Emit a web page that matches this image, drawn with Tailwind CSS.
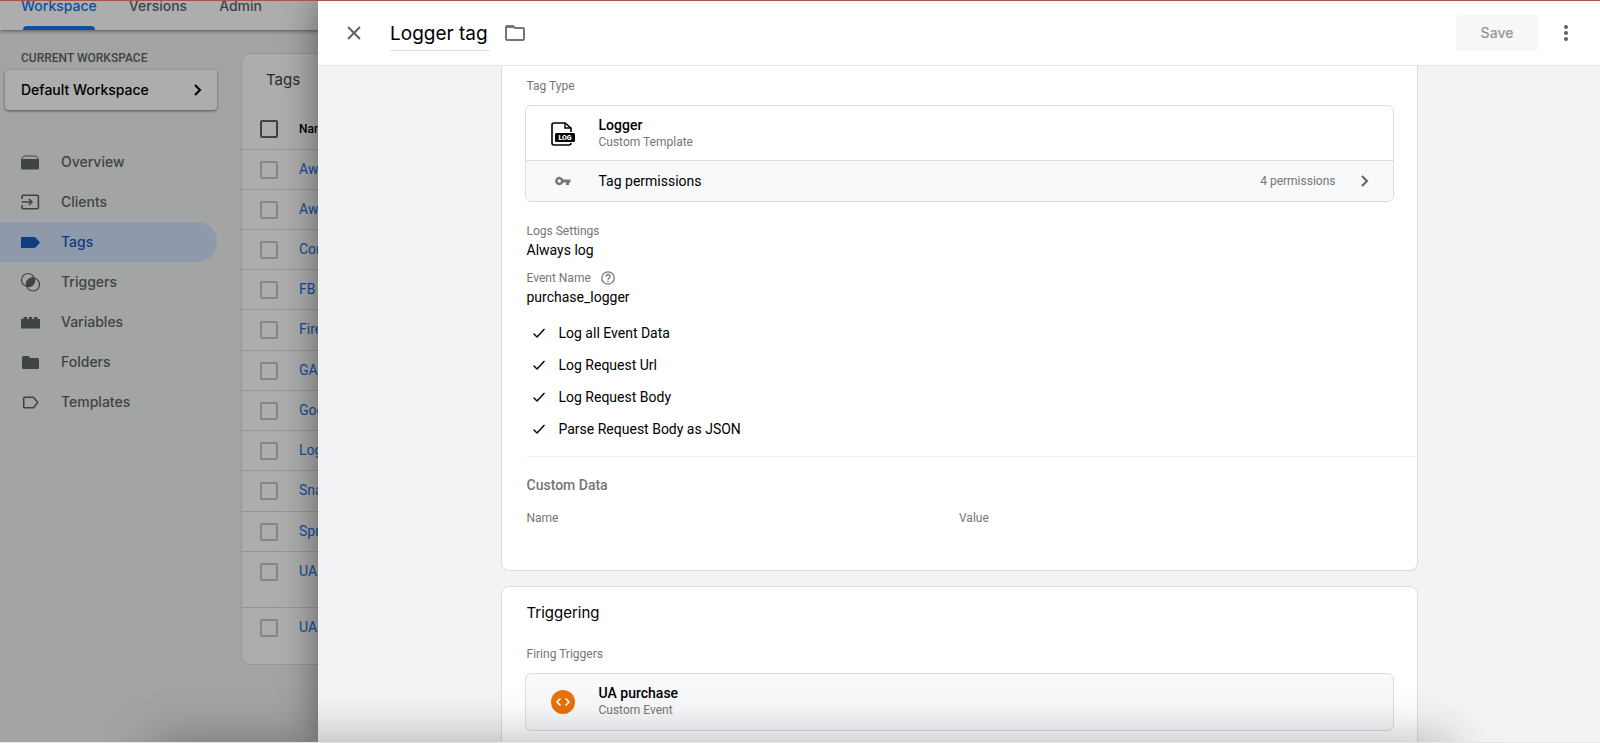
<!DOCTYPE html>
<html lang="en">
<head>
    <meta charset="UTF-8">
    <meta name="viewport" content="width=device-width, initial-scale=1.0">
    <title>Logger tag - Tag Manager</title>
    <script src="https://cdn.jsdelivr.net/npm/@tailwindcss/browser@4"></script>
</head>
<body class="relative h-screen overflow-hidden bg-[#f1f3f4] font-['Roboto',sans-serif] text-sm text-black">

    <!-- Workspace page -->
    <header class="relative z-10 -mt-[18px] h-12 bg-white shadow-[0_1px_4px_rgba(0,0,0,0.5)]">
        <nav class="flex h-full gap-8 pl-[21px] font-['Inter',sans-serif] text-sm font-medium text-[#5f6368]">
            <a href="#" class="relative flex items-center text-[#1a73e8]">
                Workspace
                <span class="absolute inset-x-0.5 bottom-0 h-1 rounded-t bg-[#1a73e8]"></span>
            </a>
            <a href="#" class="flex items-center">Versions</a>
            <a href="#" class="flex items-center">Admin</a>
        </nav>
    </header>

    <div class="flex items-start">
        <aside class="w-[241px] shrink-0 pt-[18px] font-['Inter',sans-serif]">
            <h2 class="pl-[21px] font-['Roboto',sans-serif] text-xs leading-5 font-medium text-[#5f6368]">CURRENT WORKSPACE</h2>
            <button class="mt-0.5 ml-[5px] flex h-10 w-[212px] items-center justify-between rounded bg-white pr-[15px] pl-4 text-sm font-medium shadow-[0_1px_3px_rgba(0,0,0,0.5)]">
                Default Workspace
                <svg class="h-3 w-2" viewBox="0 0 8 12" fill="none" stroke="currentColor" stroke-width="2"><path d="M1 1l5 5-5 5"/></svg>
            </button>
            <nav class="mt-8 mr-6 text-sm font-medium text-[#5f6368]">
                <a href="#" class="flex h-10 items-center gap-[21px] pl-5">
                    <svg class="h-5 w-5" viewBox="0 0 20 20" fill="currentColor"><path d="M1 9h18v7a1.500 1.500 0 0 1-1.500 1.500h-15A1.500 1.500 0 0 1 1 16z"/><path d="M1.500 9V7L4 4h12l2.500 3v2" fill="none" stroke="currentColor"/><path d="M1 8.500Q1 7 3 7h14q2 0 2 1.500V10H1z"/></svg>
                    Overview
                </a>
                <a href="#" class="flex h-10 items-center gap-[21px] pl-5">
                    <svg class="h-5 w-5" viewBox="0 0 20 20" fill="none" stroke="currentColor" stroke-width="1.600"><path d="M2 7V4.500A1.200 1.200 0 0 1 3.200 3.300h14a1.200 1.200 0 0 1 1.200 1.200v11a1.200 1.200 0 0 1-1.200 1.200h-14A1.200 1.200 0 0 1 2 15.500V13M1.500 10h10.500M9 7l3 3-3 3"/></svg>
                    Clients
                </a>
                <a href="#" class="flex h-10 items-center gap-[21px] rounded-r-full bg-[#d2e3fc] pl-5 text-[#185abc]">
                    <svg class="h-5 w-5" viewBox="0 0 20 20" fill="currentColor"><path d="M1 5h13.200q1 0 1.600.8L20 10.500l-4.200 4.700q-.6.8-1.600.8H1z"/></svg>
                    Tags
                </a>
                <a href="#" class="flex h-10 items-center gap-[21px] pl-5">
                    <svg class="h-5 w-5" viewBox="0 0 20 20" fill="none" stroke="currentColor" stroke-width="1.200"><circle cx="8" cy="8" r="6.500"/><circle cx="13" cy="12.500" r="6.500"/><path fill="currentColor" d="M14.400 6.200A6.500 6.500 0 0 0 6.600 14.300 6.500 6.500 0 0 0 14.400 6.200z"/></svg>
                    Triggers
                </a>
                <a href="#" class="flex h-10 items-center gap-[21px] pl-5">
                    <svg class="h-5 w-5" viewBox="0 0 20 20" fill="currentColor"><path d="M1 7h2.500V5H7v2h1.800V5h3.400v2H14V5h3.500v2H20v9.500H1z"/></svg>
                    Variables
                </a>
                <a href="#" class="flex h-10 items-center gap-[21px] pl-5">
                    <svg class="h-5 w-5" viewBox="0 0 20 20" fill="currentColor"><path d="M3.500 4h5l1.800 2h7.200A1.500 1.500 0 0 1 19 7.500v8a1.500 1.500 0 0 1-1.500 1.500h-14A1.500 1.500 0 0 1 2 15.500v-10A1.500 1.500 0 0 1 3.500 4z"/></svg>
                    Folders
                </a>
                <a href="#" class="flex h-10 items-center gap-[21px] pl-5">
                    <svg class="h-5 w-5" viewBox="0 0 20 20" fill="none" stroke="currentColor" stroke-width="1.600" stroke-linejoin="round"><path d="M4.500 5.300h9l4.200 5.200-4.200 5.200h-9a.8.8 0 0 1-.8-.8V6.100a.8.8 0 0 1 .8-.8z"/></svg>
                    Templates
                </a>
            </nav>
        </aside>

        <main class="mt-[23px] flex-1 rounded-l-[10px] border border-[#dadce0] bg-white">
            <h1 class="pt-[14px] pb-[17px] pl-6 font-['Inter',sans-serif] text-[15px] leading-6 text-[#3c4043]">Tags</h1>
            <table class="h-[555px] w-full border-collapse text-left">
                <thead>
                    <tr class="h-10">
                        <th class="w-[57px] pl-[18px]"><input type="checkbox" aria-label="Select all tags" class="block h-[18px] w-[18px] appearance-none rounded-xs border-2 border-[#5f6368]"></th>
                        <th class="text-xs font-medium">Name</th>
                    </tr>
                </thead>
                <tbody id="tagList" class="align-top text-[#1a73e8]"></tbody>
            </table>
        </main>
    </div>

    <!-- Dimmed backdrop -->
    <div class="absolute inset-0 z-20 bg-black/32"></div>

    <!-- Tag editor sheet -->
    <section class="absolute inset-y-0 right-0 left-[318px] z-30 flex flex-col bg-[#f1f3f4] shadow-[0_0_36px_rgba(0,0,0,0.45)]">
        <header class="flex h-[66px] shrink-0 items-center border-b border-[#e3e5e6] bg-white pr-[26px] pl-[29px]">
            <button aria-label="Close" class="text-[#5f6368]">
                <svg class="h-[14px] w-[14px]" viewBox="0 0 14 14" fill="none" stroke="currentColor" stroke-width="2"><path d="M1 1l12 12M13 1L1 13"/></svg>
            </button>
            <input type="text" value="Logger tag" aria-label="Tag name" class="mt-0.5 ml-[29px] h-[34px] w-[100px] border-b border-[#dadce0] font-['Inter',sans-serif] text-[19px] outline-none">
            <button aria-label="Move to folder" class="ml-[15px] text-[#757575]">
                <svg class="h-4 w-5" viewBox="0 0 20 16" fill="none" stroke="currentColor" stroke-width="2" stroke-linejoin="round"><path d="M1 2v12q0 1 1 1h16q1 0 1-1V4q0-1-1-1h-8L8 1H2Q1 1 1 2z"/><path d="M1 1h7l2 2H1z" fill="currentColor" stroke="none"/></svg>
            </button>
            <button disabled class="ml-auto h-9 w-[82px] rounded bg-[#f7f7f7] font-['Inter',sans-serif] text-sm font-medium text-[#949494]">Save</button>
            <button aria-label="More actions" class="ml-5 text-[#5f6368]">
                <svg class="h-4 w-4" viewBox="0 0 16 16" fill="currentColor"><circle cx="8" cy="2" r="2"/><circle cx="8" cy="8" r="2"/><circle cx="8" cy="14" r="2"/></svg>
            </button>
        </header>

        <div class="flex-1 overflow-hidden">
            <!-- Tag configuration -->
            <div class="mx-auto max-w-[917px] rounded-b-lg border border-t-0 border-[#dadce0] bg-white px-[23px] pt-[10px] pb-[43px]">
                <h3 class="pl-0.5 text-xs leading-5 text-[#757575]">Tag Type</h3>
                <div class="mt-[9px] overflow-hidden rounded-md border border-[#dadce0]">
                    <div class="flex h-[54px] items-center gap-6 pt-0.5 pl-[25px]">
                        <svg class="h-6 w-6" viewBox="0 0 24 24"><path d="M20 10V6l-6-5H3Q1 1 1 3v18q0 2 2 2h15q2 0 2-2" fill="none" stroke="#000" stroke-width="1.600"/><path d="M14 1v5h6" fill="none" stroke="#000" stroke-width="1.400"/><rect x="4" y="11" width="20" height="9" rx="1.500"/><text x="14" y="18" text-anchor="middle" fill="#fff" font-family="Roboto, sans-serif" font-size="7" font-weight="900">LOG</text></svg>
                        <div>
                            <div class="text-sm leading-[17px] font-medium">Logger</div>
                            <div class="text-xs leading-[17px] text-[#757575]">Custom Template</div>
                        </div>
                    </div>
                    <button class="flex h-[41px] w-full items-center border-t border-[#dadce0] bg-[#f8f9fa] pr-6 pl-[25px] text-left">
                        <svg class="h-4 w-6 text-[#757575]" viewBox="0 0 24 16" fill="currentColor"><path fill-rule="evenodd" d="M12.200 6.500A4.200 4.200 0 1 0 12.200 9.500H15V12h3V9.500h1.500v-3zM8.300 6.300a1.700 1.700 0 1 1 0 3.400 1.700 1.700 0 0 1 0-3.400z"/></svg>
                        <span class="ml-6">Tag permissions</span>
                        <span class="ml-auto text-xs text-[#757575]">4 permissions</span>
                        <svg class="ml-[25px] h-3 w-2 text-[#5f6368]" viewBox="0 0 8 12" fill="none" stroke="currentColor" stroke-width="2"><path d="M1 1l5 5-5 5"/></svg>
                    </button>
                </div>

                <dl class="mt-5 pl-0.5">
                    <dt class="text-xs leading-[18px] text-[#757575]">Logs Settings</dt>
                    <dd class="leading-5">Always log</dd>
                    <dt class="mt-[9px] flex items-center gap-[10px] text-xs leading-[18px] text-[#757575]">
                        Event Name
                        <svg class="h-[14px] w-[14px]" viewBox="0 0 14 14" fill="none" stroke="currentColor" stroke-width="1.300"><circle cx="7" cy="7" r="6.200"/><path d="M5 5.600a2 2 0 1 1 3.200 1.500C7.400 7.700 7 8 7 8.800M7 9.800v1.400"/></svg>
                    </dt>
                    <dd class="leading-5">purchase_logger</dd>
                </dl>

                <ul id="optionList" class="mt-[10px] pl-2"></ul>

                <div class="mt-[11px] -mr-[23px] ml-0.5 border-t border-[#eeeeee]"></div>
                <h3 class="mt-[18px] pl-0.5 text-sm leading-5 font-medium text-[#757575]">Custom Data</h3>
                <table class="mt-[14px] w-full table-fixed text-left text-xs leading-[18px] text-[#757575]">
                    <thead>
                        <tr>
                            <th class="p-0 pl-0.5 font-normal">Name</th>
                            <th class="p-0 font-normal">Value</th>
                        </tr>
                    </thead>
                </table>
            </div>

            <!-- Triggering -->
            <div class="mx-auto mt-[15px] h-60 max-w-[917px] rounded-lg border border-[#dadce0] bg-white px-[23px] pt-[14px]">
                <h2 class="pl-0.5 font-['Inter',sans-serif] text-[15px] leading-6">Triggering</h2>
                <h3 class="mt-[19px] pl-0.5 text-xs leading-5 text-[#757575]">Firing Triggers</h3>
                <a href="#" class="mt-[9px] flex h-[58px] items-center gap-6 rounded-md border border-[#dadce0] bg-[#f8f9fa] pl-[25px]">
                    <svg class="h-6 w-6" viewBox="0 0 24 24" fill="none"><circle cx="12" cy="12" r="12" fill="#e8710a"/><path d="M9.500 8.500L6 12l3.500 3.500M14.500 8.500L18 12l-3.500 3.500" stroke="#fff" stroke-width="1.600"/></svg>
                    <div>
                        <div class="text-sm leading-[17px] font-medium">UA purchase</div>
                        <div class="text-xs leading-[17px] text-[#757575]">Custom Event</div>
                    </div>
                </a>
            </div>
        </div>
    </section>

    <!-- Window edges -->
    <div class="absolute inset-x-0 top-0 z-40 h-px bg-[#a5564e]"></div>
    <div class="pointer-events-none absolute inset-x-[150px] top-full z-40 h-10 shadow-[0_0_50px_rgba(0,0,0,0.35)]"></div>
    <div class="absolute inset-x-0 bottom-0 z-40 h-px bg-[#e6e6e6]"></div>

    <script>
        const tags = ['Awin', 'Awin', 'Conversion', 'FB', 'Firebase', 'GA4', 'Google', 'Logger', 'Snapchat', 'Spreadsheet', 'UA', 'UA'];
        const options = ['Log all Event Data', 'Log Request Url', 'Log Request Body', 'Parse Request Body as JSON'];

        document.getElementById('tagList').innerHTML = tags.map((tag, i) => `
            <tr class="${i < 10 ? 'h-10' : 'h-14'} border-t border-[#dadce0]">
                <td class="pt-[11px] pl-[18px]"><input type="checkbox" aria-label="Select ${tag}" class="block h-[18px] w-[18px] appearance-none rounded-xs border-2 border-[#c4c6c8]"></td>
                <td class="pt-[9px]"><a href="#">${tag}</a></td>
            </tr>
        `).join('');

        document.getElementById('optionList').innerHTML = options.map(option => `
            <li class="flex h-8 items-center gap-[14px]">
                <svg class="h-[10px] w-3" viewBox="0 0 12 10" fill="none" stroke="#000" stroke-width="1.400"><path d="M.5 5.500L4 9l7.500-8"/></svg>
                ${option}
            </li>
        `).join('');
    </script>
</body>
</html>
